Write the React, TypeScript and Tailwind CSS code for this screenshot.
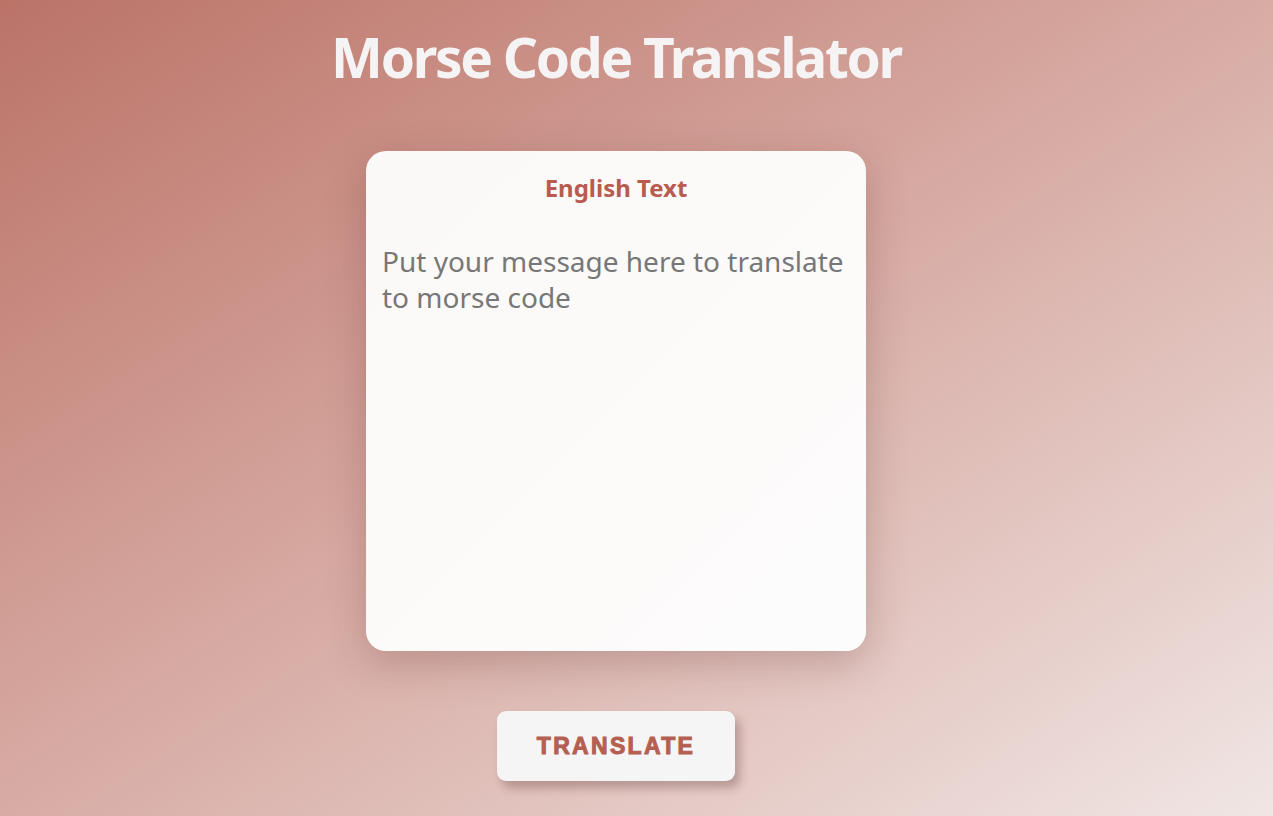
export default function App() {
  return (
    <div
      className="h-[816px] w-full overflow-hidden bg-linear-to-br from-[#bb7368] to-[#f0e6e4] pr-[41px]"
      style={{ fontFamily: '"Noto Sans", "Open Sans", sans-serif' }}
    >
      <div className="flex flex-col items-center">
        <h1 className="mt-[23px] text-[55px] leading-[67px] font-bold text-[#f5f3f3] tracking-[-2.3px]">
          Morse Code Translator
        </h1>

        {/* Input card */}
        <div className="mt-[61px] flex h-[500px] w-[500px] flex-col rounded-[20px] bg-linear-to-br from-[#fbf9f7] to-[#fdfcfc] shadow-[0_12px_40px_rgba(90,40,35,0.25)]">
          <h2 className="mt-[21px] text-center text-[24px] leading-[32px] font-bold text-[#b95b4e]">
            English Text
          </h2>
          <textarea
            className="mt-[39px] flex-1 resize-none bg-transparent pl-4 pr-2 text-[28px] leading-[36px] text-[#757575] outline-none placeholder:text-[#777777]"
            placeholder="Put your message here to translate to morse code"
          />
          <div className="h-4" />
        </div>

        <button
          className="mt-[60px] h-[70px] w-[238px] rounded-[9px] bg-[#f5f5f5] text-[23px] font-bold tracking-[2.3px] text-[#b55f52] shadow-[5px_7px_10px_rgba(80,40,40,0.3)] [-webkit-text-stroke:1px_#b55f52]"
          style={{ fontFamily: '"Liberation Sans", Arial, sans-serif' }}
        >
          TRANSLATE
        </button>
      </div>
    </div>
  );
}
